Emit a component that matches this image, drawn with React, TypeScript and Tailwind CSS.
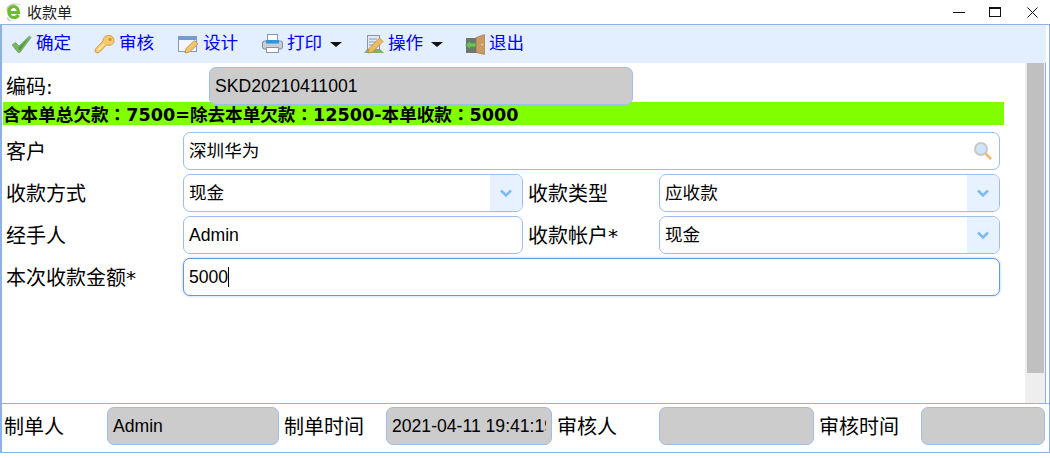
const cjk = "font-['Liberation_Sans','Noto_Sans_CJK_SC',sans-serif]";

function IeLogo() {
  return (
    <svg width="18" height="20" viewBox="0 0 18 20">
      <path d="M1.5 9 C0.5 3 8 -0.5 17 3 C12 1.5 5 2.5 3 9 Z" fill="#c3cac3" />
      <path d="M2.5 15 C1 18.5 4 20 10 18.5 C5 19 3 17.5 3.5 15 Z" fill="#c3cac3" />
      <path d="M4.5 10.5 H13.5 C13.5 6 10.5 4.5 9 4.5 C6 4.5 3.8 7 3.8 10 C3.8 13.5 6.5 15.5 9 15.5 C11 15.5 12.5 14.5 13.5 13" fill="none" stroke="#6fbb2e" strokeWidth="3.2" />
      <path d="M7 8.2 H11" stroke="#ffffff" strokeWidth="1.4" />
    </svg>
  );
}

function CheckIcon() {
  return (
    <svg width="21" height="19" viewBox="0 0 21 19">
      <path d="M1 10 L4.5 7.5 L8 11 L18.5 1 L20 2.5 L9 17.5 L7 17.5 Z" fill="#74b95e" stroke="#7c9a78" strokeWidth="0.8" />
      <path d="M7.5 13 L18 2.5 L8.5 16 Z" fill="#4e9a3e" />
    </svg>
  );
}
function KeyIcon() {
  return (
    <svg width="21" height="19" viewBox="0 0 21 19">
      <path d="M9 6 C9 2 12 0.5 15 0.5 C18 0.5 20.5 3 20 6.5 C19.5 9.5 16 11 12.5 10 L5 17.5 L2.5 18 L1 16 L1.5 14 Z" fill="#f6c96c" stroke="#d19c42" />
      <circle cx="16" cy="4.5" r="1.5" fill="#c98f33" />
      <path d="M4 15 L10 9" stroke="#fff0c4" strokeWidth="1.4" />
    </svg>
  );
}
function DesignIcon() {
  return (
    <svg width="21" height="19" viewBox="0 0 21 19">
      <rect x="0.5" y="1.5" width="18" height="15" fill="#f2f6fc" stroke="#7e9bc4" />
      <rect x="1" y="2" width="17" height="3" fill="#6f9ad6" />
      <path d="M7 18 L8 13.5 L16.5 5.5 L20 9 L11.5 17 Z" fill="#f2c66e" stroke="#b98a3a" strokeWidth="0.8" />
    </svg>
  );
}
function PrintIcon() {
  return (
    <svg width="21" height="20" viewBox="0 0 21 20">
      <rect x="5.5" y="0.5" width="10" height="7" fill="#fbfbfb" stroke="#8b95a3" />
      <rect x="0.5" y="7" width="20" height="8" rx="2" fill="#c8ced6" stroke="#7f8996" />
      <rect x="4" y="6" width="13" height="3.5" fill="#2f96dc" />
      <rect x="4.5" y="13.5" width="12" height="5" fill="#fff" stroke="#8b95a3" />
    </svg>
  );
}
function OpsIcon() {
  return (
    <svg width="20" height="20" viewBox="0 0 20 20">
      <path d="M0 19 L4 14 L15 14 L20 19 Z" fill="#7fae79" />
      <rect x="3.5" y="1.5" width="12" height="14" fill="#e4e9f1" stroke="#8b95a3" />
      <path d="M5 5 H13 M5 8 H12 M5 11 H9" stroke="#7e9bc4" />
      <path d="M4 19 L5 14.5 L15.5 4 L19 7.5 L8.5 18 Z" fill="#eebb63" stroke="#b98a3a" strokeWidth="0.8" />
    </svg>
  );
}
function ExitIcon() {
  return (
    <svg width="20" height="21" viewBox="0 0 20 21">
      <rect x="1" y="4" width="12" height="15" fill="#6b7770" />
      <path d="M11 3.5 L19.5 0.5 V20.5 L11 18.5 Z" fill="#cb9a63" stroke="#9c6d3a" strokeWidth="0.6" />
      <circle cx="17" cy="10.5" r="0.9" fill="#f5d77a" />
      <path d="M0.5 11 L5.5 6.5 V9 H11 V13 H5.5 V15.5 Z" fill="#6fbf5f" stroke="#4a8f40" strokeWidth="0.6" />
    </svg>
  );
}

function Tool({ icon, label, caret, w }: { icon: React.ReactNode; label: string; caret?: boolean; w: string }) {
  return (
    <div className={`flex items-center ${w}`}>
      <span className="flex w-[29px] justify-center">{icon}</span>
      <span className="text-[17.6px] leading-none text-[#0000ff]">{label}</span>
      {caret && <span className="ml-2 h-0 w-0 border-x-[6px] border-t-[5px] border-x-transparent border-t-[#111]" />}
    </div>
  );
}

function Field({ value, w, gray, focus, arrow, search, caret }: { value?: string; w: string; gray?: boolean; focus?: boolean; arrow?: boolean; search?: boolean; caret?: boolean }) {
  return (
    <div className={`relative flex h-[38px] shrink-0 items-center overflow-hidden rounded-[7px] border ${focus ? "border-[#5f97e0] shadow-[0_0_3px_#a9c7f0]" : "border-[#9dbdea]"} ${gray ? "bg-[#cccccc] pr-[5px]" : "bg-white"} ${w}`}>
      <span className="min-w-0 flex-1 overflow-hidden whitespace-nowrap pl-[5px] text-[17.6px] leading-[28px] text-black">
        {value}{caret && <span className="inline-block h-[20px] w-px bg-black align-[-4px]" />}
      </span>
      {arrow && (
        <span className="flex h-full w-[32px] shrink-0 items-center justify-center bg-[#e8f1ff]">
          <svg width="14" height="9" viewBox="0 0 14 9"><path d="M2 1.5 L7 6.5 L12 1.5" fill="none" stroke="#7cbcf2" strokeWidth="2.6" /></svg>
        </span>
      )}
      {search && (
        <span className="flex h-full w-[26px] shrink-0 items-center">
          <svg width="20" height="20" viewBox="0 0 20 20">
            <circle cx="8" cy="8" r="6" fill="#cfe5fa" stroke="#c8c8c8" strokeWidth="2" />
            <path d="M12.5 12.5 L18 18" stroke="#f2b872" strokeWidth="2.6" />
          </svg>
        </span>
      )}
    </div>
  );
}

function Label({ text, w }: { text: string; w: string }) {
  return <span className={`shrink-0 pt-[2px] font-['DejaVu_Sans','Noto_Sans_CJK_SC',sans-serif] text-[20px] leading-none text-black ${w}`}>{text}</span>;
}

function Colon() {
  return <span className="font-['Noto_Sans_CJK_TC',sans-serif]">：</span>;
}

export default function App() {
  return (
    <div className={`flex h-[458px] w-[1050px] flex-col overflow-hidden bg-white ${cjk}`}>
      <div className="flex h-6 shrink-0 items-center pl-[5px]">
        <IeLogo />
        <span className="ml-[4px] text-[15px] leading-none text-[#222]">收款单</span>
        <div className="ml-auto flex items-center">
          <span className="mr-[24px] h-px w-3 bg-[#111]" />
          <span className="mr-[26px] h-[10px] w-3 border border-t-2 border-[#111]" />
          <svg className="mr-[12px]" width="11" height="11" viewBox="0 0 11 11"><path d="M0.5 0.5 L10.5 10.5 M10.5 0.5 L0.5 10.5" stroke="#111" /></svg>
        </div>
      </div>
      <div className="flex h-[429px] shrink-0 flex-col border border-l-2 border-[#8db2e8]">
        <div className="mr-[3px] flex h-[38px] shrink-0 items-center bg-[#e3eeff] pl-[5px]">
          <Tool icon={<CheckIcon />} label="确定" w="w-[83px]" />
          <Tool icon={<KeyIcon />} label="审核" w="w-[84px]" />
          <Tool icon={<DesignIcon />} label="设计" w="w-[84px]" />
          <Tool icon={<PrintIcon />} label="打印" caret w="w-[101px]" />
          <Tool icon={<OpsIcon />} label="操作" caret w="w-[101px]" />
          <Tool icon={<ExitIcon />} label="退出" w="w-[70px]" />
        </div>
        <div className="flex min-h-0 flex-1">
          <div className="flex min-w-0 flex-1 flex-col pl-px">
            <div className="relative z-10 flex h-[42px] shrink-0 items-center pl-[3px] pt-[4px]">
              <Label text="编码:" w="w-[203px]" />
              <Field value="SKD20210411001" w="w-[424px]" gray />
            </div>
            <div className="-mt-[3px] flex h-[23px] w-[1001px] shrink-0 items-center bg-[#7fff00] pt-[2px] font-['DejaVu_Sans','Noto_Sans_CJK_SC',sans-serif] text-[17.6px] font-bold leading-none text-black">
              <span>含本单总欠款<Colon />7500=除去本单欠款<Colon />12500-本单收款<Colon />5000</span>
            </div>
            <div className="mt-[7px] flex flex-col gap-[4px] pl-[3px]">
              <div className="flex items-center">
                <Label text="客户" w="w-[177px]" />
                <Field value="深圳华为" w="w-[817px]" search />
              </div>
              <div className="flex items-center">
                <Label text="收款方式" w="w-[177px]" />
                <Field value="现金" w="w-[340px]" arrow />
                <Label text="收款类型" w="w-[136px] pl-[5px]" />
                <Field value="应收款" w="w-[341px]" arrow />
              </div>
              <div className="flex items-center">
                <Label text="经手人" w="w-[177px]" />
                <Field value="Admin" w="w-[340px]" />
                <Label text="收款帐户*" w="w-[136px] pl-[5px]" />
                <Field value="现金" w="w-[341px]" arrow />
              </div>
              <div className="flex items-center">
                <Label text="本次收款金额*" w="w-[177px]" />
                <Field value="5000" w="w-[817px]" focus caret />
              </div>
            </div>
          </div>
          <div className="mr-[3px] flex w-[21px] shrink-0 flex-col border-r border-[#8db2e8] bg-[#eeeeee] pl-[2px] pr-[1px]">
            <div className="h-[310px] bg-[#c0c0c0]" />
          </div>
        </div>
        <div className="flex h-[49px] shrink-0 items-center border-t border-[#8db2e8] pb-[5px] pl-[2px]">
          <Label text="制单人" w="w-[103px]" />
          <Field value="Admin" w="w-[172px]" gray />
          <Label text="制单时间" w="w-[107px] pl-[5px]" />
          <Field value="2021-04-11 19:41:19" w="w-[166px]" gray />
          <Label text="审核人" w="w-[107px] pl-[5px]" />
          <Field w="w-[155px]" gray />
          <Label text="审核时间" w="w-[107px] pl-[5px]" />
          <Field w="w-[124px]" gray />
        </div>
      </div>
    </div>
  );
}
